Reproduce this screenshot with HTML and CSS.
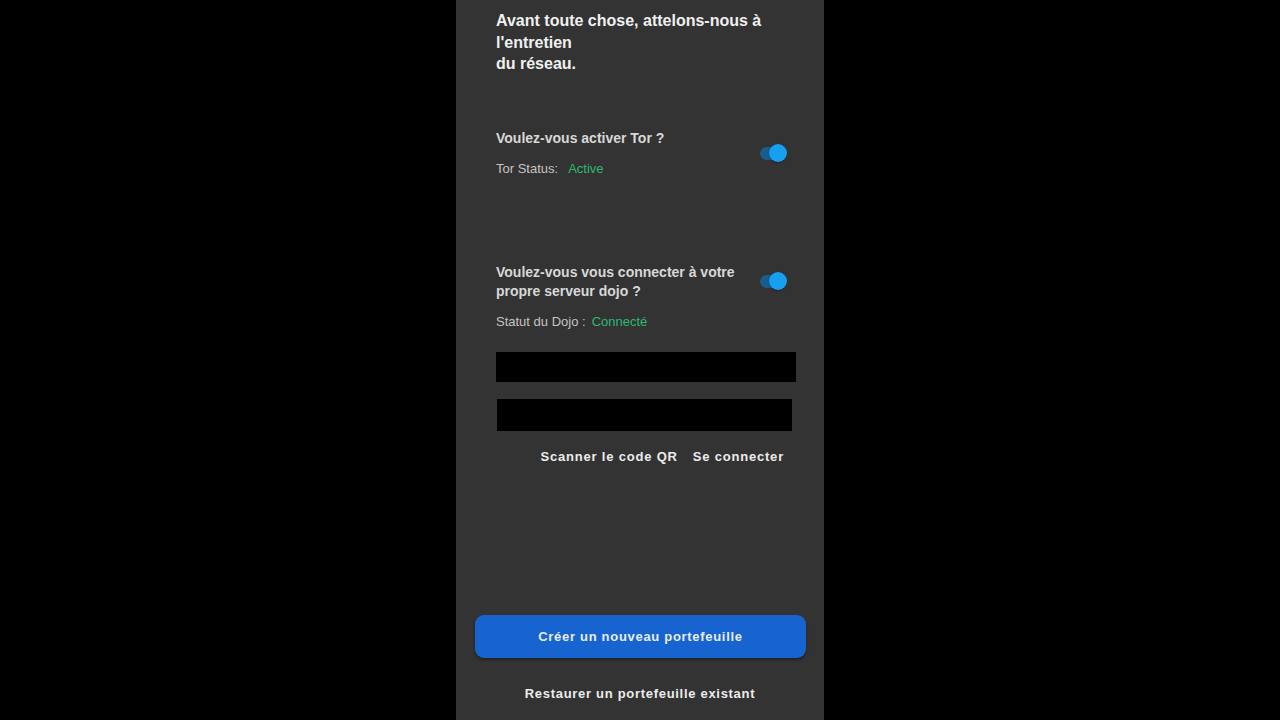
FILE: index.html
```html
<!DOCTYPE html>
<html lang="fr">
<head>
<meta charset="utf-8">
<title>Samourai</title>
<link rel="stylesheet" href="styles.css">
</head>
<body>
<div class="screen">
  <main class="panel">
    <h1 class="title">Avant toute chose, attelons-nous à l'entretien<br>du réseau.</h1>

    <section class="option tor">
      <div class="option-text">
        <div class="question">Voulez-vous activer Tor ?</div>
        <div class="status"><span class="label">Tor Status:</span><span class="ok">Active</span></div>
      </div>
      <div class="toggle"><span class="track"></span><span class="thumb"></span></div>
    </section>

    <section class="option dojo">
      <div class="option-text">
        <div class="question">Voulez-vous vous connecter à votre<br>propre serveur dojo ?</div>
        <div class="status"><span class="label">Statut du Dojo :</span><span class="ok">Connecté</span></div>
      </div>
      <div class="toggle"><span class="track"></span><span class="thumb"></span></div>
    </section>

    <div class="field field-1"></div>
    <div class="field field-2"></div>

    <div class="actions">
      <span class="link">Scanner le code QR</span>
      <span class="link">Se connecter</span>
    </div>

    <div class="spacer"></div>

    <button class="primary">Créer un nouveau portefeuille</button>
    <div class="secondary">Restaurer un portefeuille existant</div>
  </main>
</div>
</body>
</html>
```

FILE: styles.css
```css
* { box-sizing: border-box; }
html, body {
  margin: 0;
  padding: 0;
  background: #000;
  width: 1280px;
  height: 720px;
  overflow: hidden;
  font-family: "Liberation Sans", Arial, sans-serif;
}
.screen {
  display: flex;
  justify-content: center;
  height: 720px;
}
.panel {
  width: 368px;
  height: 720px;
  background: #333333;
  display: flex;
  flex-direction: column;
  padding: 10px 0 0 0;
}
.title {
  margin: 0 0 0 40px;
  width: 290px;
  font-size: 16px;
  line-height: 21.5px;
  font-weight: bold;
  color: #f0f0f0;
}
.option {
  display: flex;
  align-items: flex-start;
  margin: 0 36px 0 40px;
}
.option-text { flex: 1; }
.tor { margin-top: 54px; }
.dojo { margin-top: 87px; }
.question {
  font-size: 14px;
  font-weight: bold;
  color: #d8d8d8;
  line-height: 19px;
}
.status {
  font-size: 13px;
  color: #c4c4c4;
  display: flex;
  gap: 10px;
}
.tor .status { margin-top: 13px; }
.dojo .status { margin-top: 13px; gap: 6px; }
.ok { color: #2eb872; }
.toggle {
  position: relative;
  width: 30px;
  height: 20px;
}
.tor .toggle { margin-top: 14px; }
.dojo .toggle { margin-top: 8px; }
.track {
  position: absolute;
  left: 2px;
  top: 4px;
  width: 24px;
  height: 13px;
  border-radius: 7px;
  background: #175d8d;
}
.thumb {
  position: absolute;
  left: 11px;
  top: 1px;
  width: 18px;
  height: 18px;
  border-radius: 50%;
  background: #16a0ef;
  box-shadow: 0 1px 2px rgba(0,0,0,0.3);
}
.field {
  background: #000;
  margin-left: 40px;
}
.field-1 { width: 300px; height: 30px; margin-top: 23px; }
.field-2 { width: 295px; height: 32px; margin-top: 17px; margin-left: 41px; }
.actions {
  display: flex;
  justify-content: flex-end;
  gap: 15px;
  margin: 18px 40px 0 0;
}
.link {
  font-size: 13px;
  font-weight: bold;
  letter-spacing: 0.8px;
  color: #ececec;
}
.spacer { flex: 1; }
.primary {
  margin: 0 18px 0 19px;
  height: 43px;
  border: none;
  border-radius: 9px;
  background: #1763d0;
  color: #e8ecf4;
  font-family: "Liberation Sans", Arial, sans-serif;
  font-size: 13px;
  font-weight: bold;
  letter-spacing: 0.7px;
  box-shadow: 0 2px 3px rgba(0,0,0,0.35);
}
.secondary {
  text-align: center;
  font-size: 13px;
  font-weight: bold;
  letter-spacing: 0.7px;
  color: #ececec;
  margin: 28px 0 18px 0;
  line-height: 16px;
}
```
